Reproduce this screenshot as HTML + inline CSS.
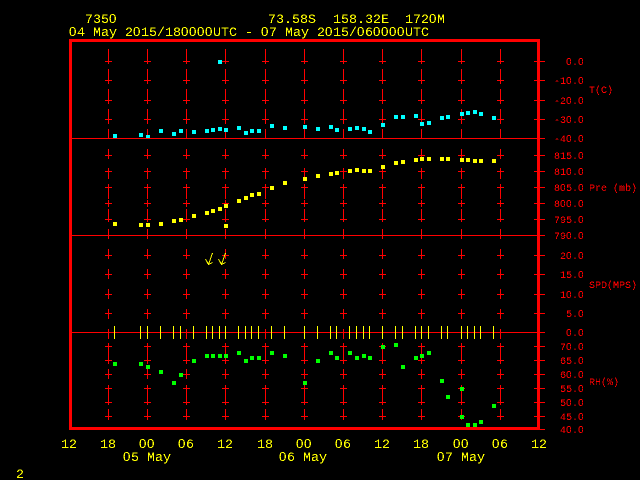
<!DOCTYPE html>
<html>
<head>
<meta charset="utf-8">
<style>
html,body{margin:0;padding:0;background:#000;width:640px;height:480px;overflow:hidden}
svg{display:block;position:absolute;left:0;top:0}
text{font-family:"Liberation Mono",monospace;white-space:pre}
tspan{font-family:"Liberation Sans",sans-serif}
.y text{font-size:13.33px;fill:#ff0}
.r text{font-size:10px;fill:#f00}
</style>
</head>
<body>
<svg width="640" height="480" viewBox="0 0 640 480" xmlns="http://www.w3.org/2000/svg">
<defs>
<filter id="t" x="0" y="0" width="100%" height="100%" filterUnits="userSpaceOnUse" primitiveUnits="userSpaceOnUse" color-interpolation-filters="sRGB">
<feComponentTransfer><feFuncA type="discrete" tableValues="0 1"/></feComponentTransfer>
</filter>
<g id="c" fill="#f00">
<path d="M0 49h1v15h-1zM0 69h1v15h-1zM0 89h1v15h-1zM0 109h1v15h-1zM0 129h1v10h-1zM0 149h1v10h-1zM0 168h1v11h-1zM0 184h1v15h-1zM0 200h1v7h-1zM0 209h1v13h-1zM0 229h1v10h-1zM0 249h1v10h-1zM0 269h1v10h-1zM0 289h1v10h-1zM0 309h1v10h-1zM0 329h1v10h-1zM0 343h1v21h-1zM0 369h1v10h-1zM0 385h1v20h-1zM0 409h1v11h-1z"/>
<path d="M-3 61h7v1h-7zM-3 80h7v1h-7zM-3 100h7v1h-7zM-3 119h7v1h-7zM-3 155h7v1h-7zM-3 171h7v1h-7zM-3 187h7v1h-7zM-3 203h7v1h-7zM-3 219h7v1h-7zM-3 255h7v1h-7zM-3 274h7v1h-7zM-3 294h7v1h-7zM-3 313h7v1h-7zM-3 346h7v1h-7zM-3 360h7v1h-7zM-3 374h7v1h-7zM-3 388h7v1h-7zM-3 402h7v1h-7zM-3 416h7v1h-7z"/>
</g>
</defs>
<rect width="640" height="480" fill="#000"/>
<g shape-rendering="crispEdges">
<use href="#c" x="108"/><use href="#c" x="147"/><use href="#c" x="186"/><use href="#c" x="225"/><use href="#c" x="265"/><use href="#c" x="304"/><use href="#c" x="343"/><use href="#c" x="382"/><use href="#c" x="421"/><use href="#c" x="461"/><use href="#c" x="500"/>
<path fill="#f00" d="M72 138h468v1H72zM72 235h468v1H72zM72 332h468v1H72z"/>
<path fill="#f00" d="M534 61h11v1h-11zM534 80h11v1h-11zM534 100h11v1h-11zM534 119h11v1h-11zM534 138h11v1h-11zM534 155h11v1h-11zM534 171h11v1h-11zM534 187h11v1h-11zM534 203h11v1h-11zM534 219h11v1h-11zM534 235h11v1h-11zM534 255h11v1h-11zM534 274h11v1h-11zM534 294h11v1h-11zM534 313h11v1h-11zM534 332h11v1h-11zM534 346h11v1h-11zM534 360h11v1h-11zM534 374h11v1h-11zM534 388h11v1h-11zM534 402h11v1h-11zM534 416h11v1h-11zM534 429h11v1h-11z"/>
<!-- yellow ticks -->
<path fill="#ff0" d="M114 326h1v13h-1zM140 326h1v13h-1zM147 326h1v13h-1zM160 326h1v13h-1zM173 326h1v13h-1zM180 326h1v13h-1zM193 326h1v13h-1zM206 326h1v13h-1zM212 326h1v13h-1zM219 326h1v13h-1zM225 326h1v13h-1zM238 326h1v13h-1zM245 326h1v13h-1zM251 326h1v13h-1zM258 326h1v13h-1zM271 326h1v13h-1zM284 326h1v13h-1zM304 326h1v13h-1zM317 326h1v13h-1zM330 326h1v13h-1zM336 326h1v13h-1zM349 326h1v13h-1zM356 326h1v13h-1zM363 326h1v13h-1zM369 326h1v13h-1zM382 326h1v13h-1zM395 326h1v13h-1zM402 326h1v13h-1zM415 326h1v13h-1zM421 326h1v13h-1zM428 326h1v13h-1zM441 326h1v13h-1zM447 326h1v13h-1zM461 326h1v13h-1zM467 326h1v13h-1zM474 326h1v13h-1zM480 326h1v13h-1zM493 326h1v13h-1z"/>
<!-- frame -->
<path fill="#f00" d="M69 39h471v3H69zM69 427h471v3H69zM69 39h3v391h-3zM537 39h3v391h-3z"/>
<!-- cyan -->
<path fill="#0ff" d="M218 60h4v4h-4zM113 134h4v4h-4zM139 133h4v4h-4zM146 135h4v3h-4zM159 129h4v4h-4zM172 132h4v4h-4zM179 129h4v4h-4zM192 130h4v4h-4zM205 129h4v4h-4zM211 128h4v4h-4zM218 127h4v4h-4zM224 128h4v4h-4zM237 126h4v4h-4zM244 131h4v4h-4zM250 129h4v4h-4zM257 129h4v4h-4zM270 124h4v4h-4zM283 126h4v4h-4zM303 125h4v4h-4zM316 127h4v4h-4zM329 125h4v4h-4zM335 128h4v4h-4zM348 127h4v4h-4zM355 126h4v4h-4zM362 127h4v4h-4zM368 130h4v4h-4zM381 123h4v4h-4zM394 115h4v4h-4zM401 115h4v4h-4zM414 114h4v4h-4zM420 122h4v4h-4zM427 121h4v4h-4zM440 116h4v4h-4zM446 115h4v4h-4zM460 112h4v4h-4zM466 111h4v4h-4zM473 110h4v4h-4zM479 112h4v4h-4zM492 116h4v4h-4z"/>
<!-- yellow pressure -->
<path fill="#ff0" d="M113 222h4v4h-4zM139 223h4v4h-4zM146 223h4v4h-4zM159 222h4v4h-4zM172 219h4v4h-4zM179 218h4v4h-4zM192 214h4v4h-4zM205 211h4v4h-4zM211 209h4v4h-4zM218 207h4v4h-4zM224 204h4v4h-4zM224 224h4v4h-4zM237 199h4v4h-4zM244 196h4v4h-4zM250 193h4v4h-4zM257 192h4v4h-4zM270 186h4v4h-4zM283 181h4v4h-4zM303 177h4v4h-4zM316 174h4v4h-4zM329 172h4v4h-4zM335 171h4v4h-4zM348 169h4v4h-4zM355 168h4v4h-4zM362 169h4v4h-4zM368 169h4v4h-4zM381 165h4v4h-4zM394 161h4v4h-4zM401 160h4v4h-4zM414 158h4v4h-4zM420 157h4v4h-4zM427 157h4v4h-4zM440 157h4v4h-4zM446 157h4v4h-4zM460 158h4v4h-4zM466 158h4v4h-4zM473 159h4v4h-4zM479 159h4v4h-4zM492 159h4v4h-4z"/>
<!-- green -->
<path fill="#0f0" d="M113 362h4v4h-4zM139 362h4v4h-4zM146 365h4v4h-4zM159 370h4v4h-4zM172 381h4v4h-4zM179 373h4v4h-4zM192 359h4v4h-4zM205 354h4v4h-4zM211 354h4v4h-4zM218 354h4v4h-4zM224 354h4v4h-4zM237 351h4v4h-4zM244 359h4v4h-4zM250 356h4v4h-4zM257 356h4v4h-4zM270 351h4v4h-4zM283 354h4v4h-4zM303 381h4v4h-4zM316 359h4v4h-4zM329 351h4v4h-4zM335 356h4v4h-4zM348 351h4v4h-4zM355 356h4v4h-4zM362 354h4v4h-4zM368 356h4v4h-4zM381 345h4v4h-4zM394 343h4v4h-4zM401 365h4v4h-4zM414 356h4v4h-4zM420 354h4v4h-4zM427 351h4v4h-4zM440 379h4v4h-4zM446 395h4v4h-4zM460 387h4v4h-4zM460 415h4v4h-4zM466 423h4v4h-4zM473 423h4v4h-4zM479 420h4v4h-4zM492 404h4v4h-4z"/>
<!-- wind arrows -->
<path fill="none" stroke="#ff0" stroke-width="1" d="M212.5 253L208.5 264.5M205.5 259L208.5 264.5L212.5 262.5M225.5 253L221.5 264.5M218.5 259L221.5 264.5L225.5 262.5"/>
</g>
<g filter="url(#t)">
<g class="y" transform="translate(1 0)">
<text x="84 92 100 108" y="23">735<tspan>0</tspan></text>
<text x="267" y="23">73.58S</text>
<text x="332" y="23">158.32E</text>
<text x="404 412 420 428 436" y="23">172<tspan>0</tspan>M</text>
<text x="68 76 84 92 100 108 116 124 132 140 148 156 164 172 180 188 196 204 212 220 228 236 244 252 260 268 276 284 292 300 308 316 324 332 340 348 356 364 372 380 388 396 404 412 420" y="36"><tspan>0</tspan>4 May 2<tspan>0</tspan>15/18<tspan>0000</tspan>UTC - <tspan>0</tspan>7 May 2<tspan>0</tspan>15/<tspan>0</tspan>6<tspan>0000</tspan>UTC</text>
<text x="60" y="448">12</text>
<text x="99" y="448">18</text>
<text x="138 146" y="448"><tspan>00</tspan></text>
<text x="177 185" y="448"><tspan>0</tspan>6</text>
<text x="216" y="448">12</text>
<text x="256" y="448">18</text>
<text x="295 303" y="448"><tspan>00</tspan></text>
<text x="334 342" y="448"><tspan>0</tspan>6</text>
<text x="373" y="448">12</text>
<text x="412" y="448">18</text>
<text x="452 460" y="448"><tspan>00</tspan></text>
<text x="491 499" y="448"><tspan>0</tspan>6</text>
<text x="530" y="448">12</text>
<text x="122 130 138 146 154 162" y="461"><tspan>0</tspan>5 May</text>
<text x="278 286 294 302 310 318" y="461"><tspan>0</tspan>6 May</text>
<text x="436 444 452 460 468 476" y="461"><tspan>0</tspan>7 May</text>
<text x="15" y="478">2</text>
</g>
<g class="r">
<text x="566 572 578" y="65"><tspan>0</tspan>.<tspan>0</tspan></text>
<text x="554 560 566 572 578" y="84">-1<tspan>0</tspan>.<tspan>0</tspan></text>
<text x="554 560 566 572 578" y="104">-2<tspan>0</tspan>.<tspan>0</tspan></text>
<text x="554 560 566 572 578" y="123">-3<tspan>0</tspan>.<tspan>0</tspan></text>
<text x="554 560 566 572 578" y="142">-4<tspan>0</tspan>.<tspan>0</tspan></text>
<text x="554 560 566 572 578" y="159">815.<tspan>0</tspan></text>
<text x="554 560 566 572 578" y="175">81<tspan>0</tspan>.<tspan>0</tspan></text>
<text x="554 560 566 572 578" y="191">8<tspan>0</tspan>5.<tspan>0</tspan></text>
<text x="554 560 566 572 578" y="207">8<tspan>00</tspan>.<tspan>0</tspan></text>
<text x="554 560 566 572 578" y="223">795.<tspan>0</tspan></text>
<text x="554 560 566 572 578" y="239">79<tspan>0</tspan>.<tspan>0</tspan></text>
<text x="560 566 572 578" y="259">2<tspan>0</tspan>.<tspan>0</tspan></text>
<text x="560 566 572 578" y="278">15.<tspan>0</tspan></text>
<text x="560 566 572 578" y="298">1<tspan>0</tspan>.<tspan>0</tspan></text>
<text x="566 572 578" y="317">5.<tspan>0</tspan></text>
<text x="566 572 578" y="336"><tspan>0</tspan>.<tspan>0</tspan></text>
<text x="560 566 572 578" y="350">7<tspan>0</tspan>.<tspan>0</tspan></text>
<text x="560 566 572 578" y="364">65.<tspan>0</tspan></text>
<text x="560 566 572 578" y="378">6<tspan>0</tspan>.<tspan>0</tspan></text>
<text x="560 566 572 578" y="392">55.<tspan>0</tspan></text>
<text x="560 566 572 578" y="406">5<tspan>0</tspan>.<tspan>0</tspan></text>
<text x="560 566 572 578" y="420">45.<tspan>0</tspan></text>
<text x="560 566 572 578" y="433">4<tspan>0</tspan>.<tspan>0</tspan></text>
<text x="589" y="93">T(C)</text>
<text x="589" y="191">Pre (mb)</text>
<text x="589" y="288">SPD(MPS)</text>
<text x="589" y="385">RH(%)</text>
</g>
</g>
</svg>
</body>
</html>
